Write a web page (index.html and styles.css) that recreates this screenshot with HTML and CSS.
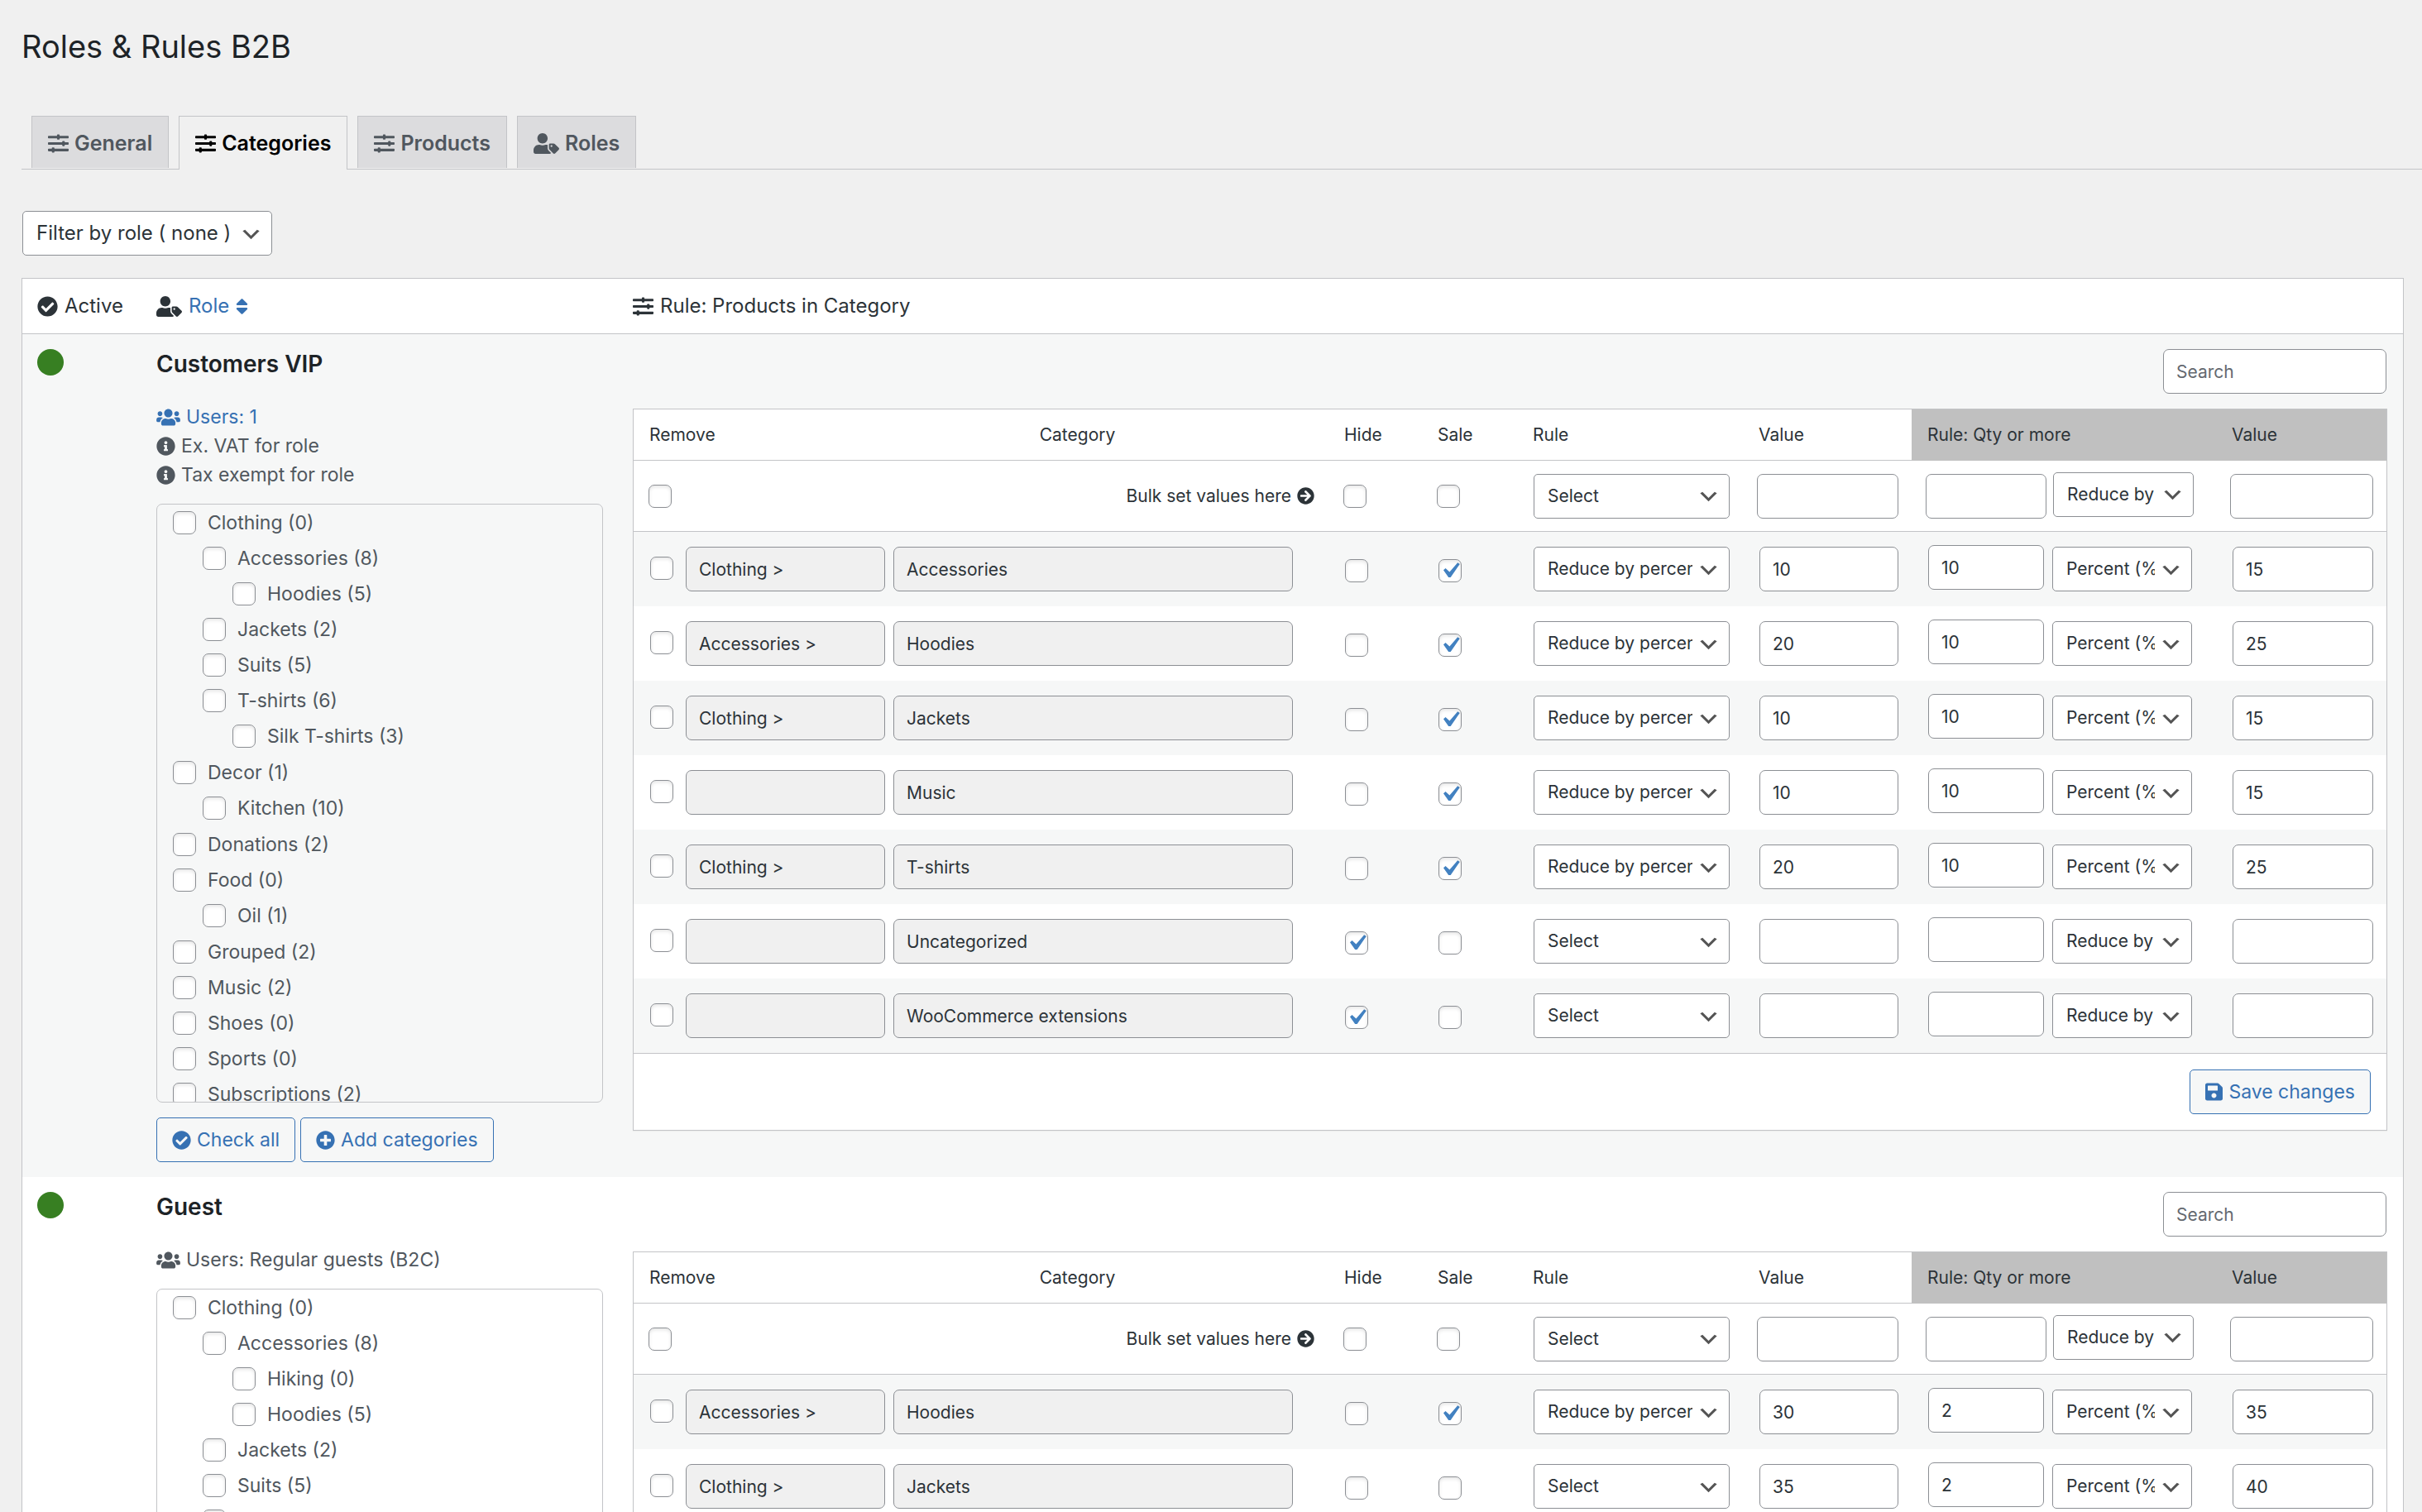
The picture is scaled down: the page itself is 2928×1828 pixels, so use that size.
FILE: index.html
```html
<!DOCTYPE html>
<html lang="en">
<head>
<meta charset="utf-8">
<meta name="viewport" content="width=device-width, initial-scale=1">
<title>Roles &amp; Rules B2B</title>
<link rel="stylesheet" href="styles.css">
</head>
<body>
<svg class="sprite" aria-hidden="true">
  <symbol id="i-sliders" viewBox="0 0 512 512"><path d="M496 384H160v-16c0-8.800-7.200-16-16-16h-32c-8.800 0-16 7.200-16 16v16H16c-8.800 0-16 7.200-16 16v32c0 8.800 7.200 16 16 16h80v16c0 8.800 7.200 16 16 16h32c8.800 0 16-7.200 16-16v-16h336c8.800 0 16-7.200 16-16v-32c0-8.800-7.200-16-16-16zm0-160h-80v-16c0-8.800-7.200-16-16-16h-32c-8.800 0-16 7.200-16 16v16H16c-8.800 0-16 7.200-16 16v32c0 8.800 7.200 16 16 16h336v16c0 8.800 7.200 16 16 16h32c8.800 0 16-7.200 16-16v-16h80c8.800 0 16-7.200 16-16v-32c0-8.800-7.200-16-16-16zm0-160H288V48c0-8.800-7.200-16-16-16h-32c-8.800 0-16 7.200-16 16v16H16C7.200 64 0 71.200 0 80v32c0 8.800 7.200 16 16 16h208v16c0 8.800 7.200 16 16 16h32c8.800 0 16-7.200 16-16v-16h208c8.800 0 16-7.200 16-16V80c0-8.800-7.200-16-16-16z"/></symbol>
  <symbol id="i-user-tag" viewBox="0 0 640 512"><path d="M630.6 364.9l-90.3-90.2c-12-12-28.3-18.7-45.3-18.7h-79.300c-17.700 0-32 14.300-32 32v79.200c0 17 6.700 33.200 18.700 45.200l90.300 90.200c12.500 12.500 32.800 12.500 45.300 0l92.500-92.500c12.600-12.500 12.600-32.700.1-45.200zm-182.800-21c-13.300 0-24-10.700-24-24s10.700-24 24-24 24 10.700 24 24c0 13.200-10.700 24-24 24zm-223.800-88c70.700 0 128-57.300 128-128C352 57.300 294.700 0 224 0S96 57.300 96 128c0 70.600 57.300 127.900 128 127.900zm127.800 111.200V294c-12.200-3.600-24.900-6.200-38.200-6.200h-16.700c-22.200 10.200-46.900 16-72.900 16s-50.600-5.800-72.900-16h-16.700C60.200 287.900 0 348.100 0 422.300v41.600c0 26.500 21.500 48 48 48h352c15.500 0 29.100-7.500 37.900-18.900l-58-58c-18.100-18.100-28.100-42.200-28.100-67.900z"/></symbol>
  <symbol id="i-users" viewBox="0 0 640 512"><path d="M96 224c35.300 0 64-28.700 64-64s-28.700-64-64-64-64 28.700-64 64 28.700 64 64 64zm448 0c35.300 0 64-28.700 64-64s-28.700-64-64-64-64 28.700-64 64 28.700 64 64 64zm32 32h-64c-17.600 0-33.500 7.100-45.100 18.600 40.300 22.100 68.900 62 75.100 109.400h66c17.700 0 32-14.300 32-32v-32c0-35.300-28.700-64-64-64zm-256 0c61.900 0 112-50.100 112-112S381.900 32 320 32 208 82.100 208 144s50.100 112 112 112zm76.800 32h-8.300c-20.800 10-43.900 16-68.500 16s-47.600-6-68.500-16h-8.300C179.600 288 128 339.600 128 403.200V432c0 26.500 21.500 48 48 48h288c26.500 0 48-21.500 48-48v-28.800c0-63.600-51.600-115.200-115.200-115.200zm-223.700-13.400C161.500 263.100 145.600 256 128 256H64c-35.300 0-64 28.700-64 64v32c0 17.700 14.300 32 32 32h65.900c6.300-47.400 34.900-87.300 75.200-109.400z"/></symbol>
  <symbol id="i-check" viewBox="0 0 512 512"><path d="M504 256c0 136.967-111.033 248-248 248S8 392.967 8 256 119.033 8 256 8s248 111.033 248 248zM227.314 387.314l184-184c6.248-6.248 6.248-16.379 0-22.627l-22.627-22.627c-6.248-6.249-16.379-6.249-22.628 0L216 308.118l-70.059-70.059c-6.248-6.248-16.379-6.248-22.628 0l-22.627 22.627c-6.248 6.248-6.248 16.379 0 22.627l104 104c6.249 6.249 16.379 6.249 22.628.001z"/></symbol>
  <symbol id="i-info" viewBox="0 0 512 512"><path d="M256 8C119.043 8 8 119.083 8 256c0 136.997 111.043 248 248 248s248-111.003 248-248C504 119.083 392.957 8 256 8zm0 110c23.196 0 42 18.804 42 42s-18.804 42-42 42-42-18.804-42-42 18.804-42 42-42zm56 254c0 6.627-5.373 12-12 12h-88c-6.627 0-12-5.373-12-12v-24c0-6.627 5.373-12 12-12h12v-64h-12c-6.627 0-12-5.373-12-12v-24c0-6.627 5.373-12 12-12h64c6.627 0 12 5.373 12 12v100h12c6.627 0 12 5.373 12 12v24z"/></symbol>
  <symbol id="i-plus" viewBox="0 0 512 512"><path d="M256 8C119 8 8 119 8 256s111 248 248 248 248-111 248-248S393 8 256 8zm144 276c0 6.600-5.400 12-12 12h-92v92c0 6.600-5.400 12-12 12h-56c-6.600 0-12-5.400-12-12v-92h-92c-6.600 0-12-5.400-12-12v-56c0-6.600 5.400-12 12-12h92v-92c0-6.600 5.400-12 12-12h56c6.600 0 12 5.400 12 12v92h92c6.600 0 12 5.400 12 12v56z"/></symbol>
  <symbol id="i-arrow" viewBox="0 0 512 512"><path d="M256 8c137 0 248 111 248 248S393 504 256 504 8 393 8 256 119 8 256 8zm-28.900 143.600l75.500 72.400H120c-13.300 0-24 10.700-24 24v16c0 13.300 10.700 24 24 24h182.600l-75.500 72.400c-9.700 9.300-9.900 24.800-.4 34.300l11 10.900c9.400 9.400 24.600 9.400 33.900 0L404.300 273c9.400-9.400 9.400-24.600 0-33.900L271.600 106.300c-9.400-9.400-24.600-9.400-33.900 0l-11 10.900c-9.500 9.600-9.300 25.100.4 34.400z"/></symbol>
  <symbol id="i-save" viewBox="0 0 448 512"><path d="M433.941 129.941l-83.882-83.882A48 48 0 0 0 316.118 32H48C21.490 32 0 53.490 0 80v352c0 26.510 21.490 48 48 48h352c26.510 0 48-21.490 48-48V163.882a48 48 0 0 0-14.059-33.941zM224 416c-35.346 0-64-28.654-64-64 0-35.346 28.654-64 64-64s64 28.654 64 64c0 35.346-28.654 64-64 64zm96-304.520V212c0 6.627-5.373 12-12 12H76c-6.627 0-12-5.373-12-12V108c0-6.627 5.373-12 12-12h228.520c3.183 0 6.235 1.264 8.485 3.515l3.480 3.480A11.996 11.996 0 0 1 320 111.480z"/></symbol>
  <symbol id="i-sort" viewBox="0 0 320 512"><path d="M41 288h238c21.400 0 32.100 25.900 17 41L177 448c-9.400 9.400-24.600 9.400-33.900 0L24 329c-15.100-15.100-4.400-41 17-41zm255-105L177 64c-9.400-9.400-24.600-9.400-33.900 0L24 183c-15.100 15.100-4.400 41 17 41h238c21.400 0 32.100-25.900 17-41z"/></symbol>
</svg>

<main class="page">
  <h1 class="title">Roles &amp; Rules B2B</h1>

  <nav class="tabs">
    <a class="tab" href="#general"><svg class="icon"><use href="#i-sliders"/></svg>General</a>
    <a class="tab tab-active" href="#categories" aria-current="page"><svg class="icon"><use href="#i-sliders"/></svg>Categories</a>
    <a class="tab" href="#products"><svg class="icon"><use href="#i-sliders"/></svg>Products</a>
    <a class="tab" href="#roles"><svg class="icon icon-wide"><use href="#i-user-tag"/></svg>Roles</a>
  </nav>

  <select class="field select filter" aria-label="Filter by role"><option>Filter by role ( none )</option></select>

  <table class="roles">
    <colgroup><col class="w-active"><col class="w-role"><col></colgroup>
    <thead>
      <tr>
        <th class="c-active" scope="col"><span class="head"><svg class="icon"><use href="#i-check"/></svg>Active</span></th>
        <th scope="col"><span class="head"><svg class="icon icon-wide"><use href="#i-user-tag"/></svg><a class="head link" href="#sort">Role<svg class="icon icon-sort"><use href="#i-sort"/></svg></a></span></th>
        <th scope="col"><span class="head"><svg class="icon"><use href="#i-sliders"/></svg>Rule: Products in Category</span></th>
      </tr>
    </thead>
    <tbody>
      <tr class="role">
        <td class="c-active"><span class="dot" role="img" aria-label="Active"></span></td>
        <td>
          <h2 class="role-name">Customers VIP</h2>
          <ul class="facts">
            <li><a class="fact link" href="#users"><svg class="icon icon-users"><use href="#i-users"/></svg>Users: 1</a></li>
            <li class="fact"><svg class="icon icon-text"><use href="#i-info"/></svg>Ex. VAT for role</li>
            <li class="fact"><svg class="icon icon-text"><use href="#i-info"/></svg>Tax exempt for role</li>
          </ul>
          <ul class="tree">
            <li><label><input type="checkbox">Clothing (0)</label>
              <ul>
                <li><label><input type="checkbox">Accessories (8)</label>
                  <ul>
                    <li><label><input type="checkbox">Hoodies (5)</label></li>
                  </ul>
                </li>
                <li><label><input type="checkbox">Jackets (2)</label></li>
                <li><label><input type="checkbox">Suits (5)</label></li>
                <li><label><input type="checkbox">T-shirts (6)</label>
                  <ul>
                    <li><label><input type="checkbox">Silk T-shirts (3)</label></li>
                  </ul>
                </li>
              </ul>
            </li>
            <li><label><input type="checkbox">Decor (1)</label>
              <ul>
                <li><label><input type="checkbox">Kitchen (10)</label></li>
              </ul>
            </li>
            <li><label><input type="checkbox">Donations (2)</label></li>
            <li><label><input type="checkbox">Food (0)</label>
              <ul>
                <li><label><input type="checkbox">Oil (1)</label></li>
              </ul>
            </li>
            <li><label><input type="checkbox">Grouped (2)</label></li>
            <li><label><input type="checkbox">Music (2)</label></li>
            <li><label><input type="checkbox">Shoes (0)</label></li>
            <li><label><input type="checkbox">Sports (0)</label></li>
            <li><label><input type="checkbox">Subscriptions (2)</label></li>
          </ul>
          <div class="actions">
            <button class="button" type="button"><svg class="icon icon-text"><use href="#i-check"/></svg>Check all</button>
            <button class="button" type="button"><svg class="icon icon-text"><use href="#i-plus"/></svg>Add categories</button>
          </div>
        </td>
        <td class="c-rules">
          <div class="search"><input class="field" type="search" placeholder="Search" aria-label="Search categories for Customers VIP"></div>
          <table class="rules">
            <colgroup><col class="w-remove"><col class="w-parent"><col><col class="w-hide"><col class="w-sale"><col class="w-rule"><col class="w-value"><col class="w-qty"><col class="w-qvalue"></colgroup>
            <thead>
              <tr>
                <th scope="col" colspan="2">Remove</th><th class="h-category" scope="col">Category</th><th scope="col">Hide</th><th scope="col">Sale</th><th scope="col">Rule</th><th scope="col">Value</th><th class="h-qty" scope="col">Rule: Qty or more</th><th class="h-qty" scope="col">Value</th>
              </tr>
              <tr class="bulk">
                <td><input type="checkbox" aria-label="Remove all"></td>
                <td class="bulk-text" colspan="2"><span class="bulk-label">Bulk set values here<svg class="icon icon-small"><use href="#i-arrow"/></svg></span></td>
                <td><input type="checkbox" aria-label="Hide all"></td>
                <td><input type="checkbox" aria-label="Sale all"></td>
                <td class="c-rule"><select class="field select" aria-label="Rule for all"><option>Select</option></select></td>
                <td class="c-value"><input class="field" type="text" aria-label="Value for all"></td>
                <td class="c-qty"><div class="qty"><input class="field" type="text" aria-label="Quantity for all"><select class="field select" aria-label="Quantity rule for all"><option>Reduce by</option></select></div></td>
                <td class="c-value"><input class="field" type="text" aria-label="Quantity value for all"></td>
              </tr>
            </thead>
            <tbody>
              <tr>
                <td class="c-remove"><input type="checkbox" aria-label="Remove"></td>
                <td class="c-parent"><input class="field" type="text" value="Clothing &gt;" readonly aria-label="Parent category"></td>
                <td class="c-category"><input class="field" type="text" value="Accessories" readonly aria-label="Category"></td>
                <td class="c-check"><input type="checkbox" aria-label="Hide"></td>
                <td class="c-check"><input type="checkbox" checked aria-label="Sale"></td>
                <td class="c-rule"><select class="field select" aria-label="Rule"><option>Reduce by percent (%)</option></select></td>
                <td class="c-value"><input class="field" type="text" value="10" aria-label="Value"></td>
                <td class="c-qty"><div class="qty"><input class="field" type="text" value="10" aria-label="Quantity"><select class="field select" aria-label="Quantity rule"><option>Percent (%)</option></select></div></td>
                <td class="c-value"><input class="field" type="text" value="15" aria-label="Quantity value"></td>
              </tr>
              <tr>
                <td class="c-remove"><input type="checkbox" aria-label="Remove"></td>
                <td class="c-parent"><input class="field" type="text" value="Accessories &gt;" readonly aria-label="Parent category"></td>
                <td class="c-category"><input class="field" type="text" value="Hoodies" readonly aria-label="Category"></td>
                <td class="c-check"><input type="checkbox" aria-label="Hide"></td>
                <td class="c-check"><input type="checkbox" checked aria-label="Sale"></td>
                <td class="c-rule"><select class="field select" aria-label="Rule"><option>Reduce by percent (%)</option></select></td>
                <td class="c-value"><input class="field" type="text" value="20" aria-label="Value"></td>
                <td class="c-qty"><div class="qty"><input class="field" type="text" value="10" aria-label="Quantity"><select class="field select" aria-label="Quantity rule"><option>Percent (%)</option></select></div></td>
                <td class="c-value"><input class="field" type="text" value="25" aria-label="Quantity value"></td>
              </tr>
              <tr>
                <td class="c-remove"><input type="checkbox" aria-label="Remove"></td>
                <td class="c-parent"><input class="field" type="text" value="Clothing &gt;" readonly aria-label="Parent category"></td>
                <td class="c-category"><input class="field" type="text" value="Jackets" readonly aria-label="Category"></td>
                <td class="c-check"><input type="checkbox" aria-label="Hide"></td>
                <td class="c-check"><input type="checkbox" checked aria-label="Sale"></td>
                <td class="c-rule"><select class="field select" aria-label="Rule"><option>Reduce by percent (%)</option></select></td>
                <td class="c-value"><input class="field" type="text" value="10" aria-label="Value"></td>
                <td class="c-qty"><div class="qty"><input class="field" type="text" value="10" aria-label="Quantity"><select class="field select" aria-label="Quantity rule"><option>Percent (%)</option></select></div></td>
                <td class="c-value"><input class="field" type="text" value="15" aria-label="Quantity value"></td>
              </tr>
              <tr>
                <td class="c-remove"><input type="checkbox" aria-label="Remove"></td>
                <td class="c-parent"><input class="field" type="text" value="" readonly aria-label="Parent category"></td>
                <td class="c-category"><input class="field" type="text" value="Music" readonly aria-label="Category"></td>
                <td class="c-check"><input type="checkbox" aria-label="Hide"></td>
                <td class="c-check"><input type="checkbox" checked aria-label="Sale"></td>
                <td class="c-rule"><select class="field select" aria-label="Rule"><option>Reduce by percent (%)</option></select></td>
                <td class="c-value"><input class="field" type="text" value="10" aria-label="Value"></td>
                <td class="c-qty"><div class="qty"><input class="field" type="text" value="10" aria-label="Quantity"><select class="field select" aria-label="Quantity rule"><option>Percent (%)</option></select></div></td>
                <td class="c-value"><input class="field" type="text" value="15" aria-label="Quantity value"></td>
              </tr>
              <tr>
                <td class="c-remove"><input type="checkbox" aria-label="Remove"></td>
                <td class="c-parent"><input class="field" type="text" value="Clothing &gt;" readonly aria-label="Parent category"></td>
                <td class="c-category"><input class="field" type="text" value="T-shirts" readonly aria-label="Category"></td>
                <td class="c-check"><input type="checkbox" aria-label="Hide"></td>
                <td class="c-check"><input type="checkbox" checked aria-label="Sale"></td>
                <td class="c-rule"><select class="field select" aria-label="Rule"><option>Reduce by percent (%)</option></select></td>
                <td class="c-value"><input class="field" type="text" value="20" aria-label="Value"></td>
                <td class="c-qty"><div class="qty"><input class="field" type="text" value="10" aria-label="Quantity"><select class="field select" aria-label="Quantity rule"><option>Percent (%)</option></select></div></td>
                <td class="c-value"><input class="field" type="text" value="25" aria-label="Quantity value"></td>
              </tr>
              <tr>
                <td class="c-remove"><input type="checkbox" aria-label="Remove"></td>
                <td class="c-parent"><input class="field" type="text" value="" readonly aria-label="Parent category"></td>
                <td class="c-category"><input class="field" type="text" value="Uncategorized" readonly aria-label="Category"></td>
                <td class="c-check"><input type="checkbox" checked aria-label="Hide"></td>
                <td class="c-check"><input type="checkbox" aria-label="Sale"></td>
                <td class="c-rule"><select class="field select" aria-label="Rule"><option>Select</option></select></td>
                <td class="c-value"><input class="field" type="text" aria-label="Value"></td>
                <td class="c-qty"><div class="qty"><input class="field" type="text" aria-label="Quantity"><select class="field select" aria-label="Quantity rule"><option>Reduce by</option></select></div></td>
                <td class="c-value"><input class="field" type="text" aria-label="Quantity value"></td>
              </tr>
              <tr>
                <td class="c-remove"><input type="checkbox" aria-label="Remove"></td>
                <td class="c-parent"><input class="field" type="text" value="" readonly aria-label="Parent category"></td>
                <td class="c-category"><input class="field" type="text" value="WooCommerce extensions" readonly aria-label="Category"></td>
                <td class="c-check"><input type="checkbox" checked aria-label="Hide"></td>
                <td class="c-check"><input type="checkbox" aria-label="Sale"></td>
                <td class="c-rule"><select class="field select" aria-label="Rule"><option>Select</option></select></td>
                <td class="c-value"><input class="field" type="text" aria-label="Value"></td>
                <td class="c-qty"><div class="qty"><input class="field" type="text" aria-label="Quantity"><select class="field select" aria-label="Quantity rule"><option>Reduce by</option></select></div></td>
                <td class="c-value"><input class="field" type="text" aria-label="Quantity value"></td>
              </tr>
            </tbody>
            <tfoot>
              <tr><td colspan="9"><div class="save"><button class="button" type="submit"><svg class="icon icon-save"><use href="#i-save"/></svg>Save changes</button></div></td></tr>
            </tfoot>
          </table>
        </td>
      </tr>

      <tr class="role">
        <td class="c-active"><span class="dot" role="img" aria-label="Active"></span></td>
        <td>
          <h2 class="role-name">Guest</h2>
          <ul class="facts">
            <li class="fact"><svg class="icon icon-users"><use href="#i-users"/></svg>Users: Regular guests (B2C)</li>
          </ul>
          <ul class="tree">
            <li><label><input type="checkbox">Clothing (0)</label>
              <ul>
                <li><label><input type="checkbox">Accessories (8)</label>
                  <ul>
                    <li><label><input type="checkbox">Hiking (0)</label></li>
                    <li><label><input type="checkbox">Hoodies (5)</label></li>
                  </ul>
                </li>
                <li><label><input type="checkbox">Jackets (2)</label></li>
                <li><label><input type="checkbox">Suits (5)</label></li>
                <li><label><input type="checkbox">T-shirts (6)</label></li>
              </ul>
            </li>
          </ul>
        </td>
        <td class="c-rules">
          <div class="search"><input class="field" type="search" placeholder="Search" aria-label="Search categories for Guest"></div>
          <table class="rules">
            <colgroup><col class="w-remove"><col class="w-parent"><col><col class="w-hide"><col class="w-sale"><col class="w-rule"><col class="w-value"><col class="w-qty"><col class="w-qvalue"></colgroup>
            <thead>
              <tr>
                <th scope="col" colspan="2">Remove</th><th class="h-category" scope="col">Category</th><th scope="col">Hide</th><th scope="col">Sale</th><th scope="col">Rule</th><th scope="col">Value</th><th class="h-qty" scope="col">Rule: Qty or more</th><th class="h-qty" scope="col">Value</th>
              </tr>
              <tr class="bulk">
                <td><input type="checkbox" aria-label="Remove all"></td>
                <td class="bulk-text" colspan="2"><span class="bulk-label">Bulk set values here<svg class="icon icon-small"><use href="#i-arrow"/></svg></span></td>
                <td><input type="checkbox" aria-label="Hide all"></td>
                <td><input type="checkbox" aria-label="Sale all"></td>
                <td class="c-rule"><select class="field select" aria-label="Rule for all"><option>Select</option></select></td>
                <td class="c-value"><input class="field" type="text" aria-label="Value for all"></td>
                <td class="c-qty"><div class="qty"><input class="field" type="text" aria-label="Quantity for all"><select class="field select" aria-label="Quantity rule for all"><option>Reduce by</option></select></div></td>
                <td class="c-value"><input class="field" type="text" aria-label="Quantity value for all"></td>
              </tr>
            </thead>
            <tbody>
              <tr>
                <td class="c-remove"><input type="checkbox" aria-label="Remove"></td>
                <td class="c-parent"><input class="field" type="text" value="Accessories &gt;" readonly aria-label="Parent category"></td>
                <td class="c-category"><input class="field" type="text" value="Hoodies" readonly aria-label="Category"></td>
                <td class="c-check"><input type="checkbox" aria-label="Hide"></td>
                <td class="c-check"><input type="checkbox" checked aria-label="Sale"></td>
                <td class="c-rule"><select class="field select" aria-label="Rule"><option>Reduce by percent (%)</option></select></td>
                <td class="c-value"><input class="field" type="text" value="30" aria-label="Value"></td>
                <td class="c-qty"><div class="qty"><input class="field" type="text" value="2" aria-label="Quantity"><select class="field select" aria-label="Quantity rule"><option>Percent (%)</option></select></div></td>
                <td class="c-value"><input class="field" type="text" value="35" aria-label="Quantity value"></td>
              </tr>
              <tr>
                <td class="c-remove"><input type="checkbox" aria-label="Remove"></td>
                <td class="c-parent"><input class="field" type="text" value="Clothing &gt;" readonly aria-label="Parent category"></td>
                <td class="c-category"><input class="field" type="text" value="Jackets" readonly aria-label="Category"></td>
                <td class="c-check"><input type="checkbox" aria-label="Hide"></td>
                <td class="c-check"><input type="checkbox" aria-label="Sale"></td>
                <td class="c-rule"><select class="field select" aria-label="Rule"><option>Select</option></select></td>
                <td class="c-value"><input class="field" type="text" value="35" aria-label="Value"></td>
                <td class="c-qty"><div class="qty"><input class="field" type="text" value="2" aria-label="Quantity"><select class="field select" aria-label="Quantity rule"><option>Percent (%)</option></select></div></td>
                <td class="c-value"><input class="field" type="text" value="40" aria-label="Quantity value"></td>
              </tr>
            </tbody>
          </table>
        </td>
      </tr>
    </tbody>
  </table>
</main>
</body>
</html>
```
FILE: styles.css
```css
:root {
  --line: #c3c4c7;
  --edge: #8c8f94;
  --ink: #2c3338;
  --muted: #50575e;
  --blue: #3671b3;
  --tint: #f6f7f7;
}

* { box-sizing: border-box; }

html { scrollbar-width: none; }

body {
  margin: 0;
  background: #f0f0f0;
  color: var(--ink);
  font: 24px/36px Inter, "Liberation Sans", sans-serif;
}

.sprite { display: none; }

.page { padding: 31px 0 18px 26px; }

ul { list-style: none; margin: 0; padding: 0; }

.link { color: var(--blue); text-decoration: none; }

/* Icons */
.icon { flex: none; width: 25px; height: 25px; fill: currentColor; }
.icon-wide { width: 31px; }
.icon-sort { width: 15px; }
.icon-users { width: 29px; height: 23px; }
.icon-text { width: 23px; height: 23px; }
.icon-save { width: 21px; height: 24px; }
.icon-small { width: 21px; height: 21px; }

/* Heading and tabs */
.title {
  margin: 0 0 59px;
  color: #1d2327;
  font-size: 38px;
  font-weight: 400;
  line-height: 50px;
}

.tabs {
  display: flex;
  align-items: flex-start;
  gap: 12px;
  height: 65px;
  margin-bottom: 50px;
  padding-left: 12px;
  border-bottom: 1px solid var(--line);
}

.tab {
  display: flex;
  align-items: center;
  gap: 7px;
  height: 63px;
  padding: 2px 19px 0;
  border: 1px solid var(--line);
  border-bottom: 0;
  background: #dcdcde;
  color: var(--muted);
  font-size: 25px;
  font-weight: 600;
  text-decoration: none;
}

.tab-active {
  height: 65px;
  padding-bottom: 2px;
  background: #f0f0f0;
  color: #000;
}

/* Form controls */
.field {
  display: block;
  width: 100%;
  height: 54px;
  margin: 0;
  padding: 0 15px;
  border: 1px solid var(--edge);
  border-radius: 7px;
  background-color: #fff;
  color: var(--ink);
  font: 21px/36px Inter, "Liberation Sans", sans-serif;
  appearance: none;
}

.field[readonly] { background-color: #f0f0f0; }
.field::placeholder { color: #646970; opacity: 1; }

.select {
  padding: 0 44px 0 16px;
  border-radius: 5px;
  background-image: url("data:image/svg+xml,%3Csvg xmlns='http://www.w3.org/2000/svg' viewBox='0 0 20 20'%3E%3Cpath d='M5 6l5 5 5-5 2 1-7 7-7-7 2-1z' fill='%23555'/%3E%3C/svg%3E");
  background-repeat: no-repeat;
  background-position: right 10px top 55%;
  background-size: 29px 29px;
}

.filter {
  width: auto;
  margin: 0 0 27px 1px;
  padding-right: 48px;
  font-size: 24px;
}

input[type="checkbox"] {
  display: block;
  flex: none;
  width: 28px;
  height: 28px;
  margin: 0;
  border: 1px solid var(--edge);
  border-radius: 7px;
  background: #fff center / 38px 38px no-repeat;
  box-shadow: inset 0 2px 4px rgba(0, 0, 0, 0.1);
  appearance: none;
}

input[type="checkbox"]:checked {
  background-image: url("data:image/svg+xml,%3Csvg xmlns='http://www.w3.org/2000/svg' viewBox='0 0 20 20'%3E%3Cpath d='M14.83 4.89l1.34.94-5.81 8.38H9.02L5.78 9.67l1.34-1.25 2.57 2.4z' fill='%234281c1'/%3E%3C/svg%3E");
}

.button {
  display: inline-flex;
  align-items: center;
  gap: 7px;
  height: 54px;
  padding: 0 18px;
  border: 1px solid var(--blue);
  border-radius: 5px;
  background: var(--tint);
  color: var(--blue);
  font: 23px/36px Inter, "Liberation Sans", sans-serif;
  white-space: nowrap;
}

/* Outer table of roles */
table { width: 100%; border-collapse: separate; border-spacing: 0; table-layout: fixed; }
th, td { padding: 0; font-weight: 400; text-align: left; }

.roles {
  width: calc(100% - 22px);
  border: 1px solid var(--line);
  background: #fff;
}

.w-active { width: 162px; }
.w-role { width: 576px; }

.roles > thead th {
  padding: 15px 0;
  border-bottom: 1px solid var(--line);
}

.head { display: flex; align-items: center; gap: 8px; }

.role > td { padding: 18px 0; vertical-align: top; }
.role:nth-child(odd) > td { background: var(--tint); }
.roles > thead .c-active, .role > .c-active { padding-left: 18px; }
.role > .c-rules { padding-right: 19px; }

.dot {
  display: block;
  width: 32px;
  height: 32px;
  border-radius: 50%;
  background: #377f22;
}

.role-name {
  margin: 0 0 29px;
  color: #1d2327;
  font-size: 28px;
  font-weight: 600;
  line-height: 36px;
}

.fact {
  display: flex;
  align-items: center;
  gap: 7px;
  font-size: 23px;
  line-height: 35px;
}

.facts, .tree { color: var(--muted); }
.facts .link { color: var(--blue); }

/* Scrolling category tree */
.tree {
  width: 540px;
  height: 724px;
  margin: 17px 0 18px;
  padding: 0 19px;
  overflow: auto;
  scrollbar-width: none;
  border: 1px solid var(--line);
  border-radius: 7px;
  font-size: 23px;
}

.tree ul { padding-left: 36px; }
.tree > li > ul { padding-bottom: 1px; }

.tree label {
  display: flex;
  align-items: center;
  gap: 14px;
  height: 43px;
}

.actions { display: flex; gap: 6px; }

/* Rules of one role */
.search {
  display: flex;
  justify-content: flex-end;
  margin-bottom: 18px;
  padding-right: 1px;
}

.search .field { width: 270px; }

.rules {
  border: 1px solid var(--line);
  background: #fff;
  box-shadow: 0 1px 1px rgba(0, 0, 0, 0.04);
  font-size: 21px;
}

.w-remove { width: 63px; }
.w-parent { width: 251px; }
.w-hide { width: 113px; }
.w-sale { width: 115px; }
.w-rule { width: 273px; }
.w-value { width: 204px; }
.w-qty { width: 368px; }
.w-qvalue { width: 206px; }

.rules > thead th {
  height: 62px;
  padding-left: 19px;
  border-bottom: 1px solid var(--line);
}

.rules > thead .h-category { padding: 0 81px 0 0; text-align: center; }
.rules > thead .h-qty { border-color: #c0c0c0; background: #c0c0c0; }

.bulk > td {
  height: 86px;
  padding-left: 18px;
  border-bottom: 1px solid var(--line);
}

.bulk > .bulk-text { padding-right: 17px; }
.bulk > .c-value, .bulk > .c-qty { padding-left: 17px; }

.bulk-label {
  display: flex;
  align-items: center;
  justify-content: flex-end;
  gap: 7px;
}

.rules > tbody td { height: 90px; padding-left: 20px; }
.rules > tbody > tr:nth-child(odd) > td { background: var(--tint); }
.rules > tbody .c-remove { padding-bottom: 3px; }
.rules > tbody .c-check { padding-top: 4px; }
.rules > tbody .c-parent { padding: 0 10px 0 0; }
.rules > tbody .c-category { padding: 0 43px 0 0; }
.rules .c-value { padding-right: 16px; }
.rules .c-rule { padding: 0 16px 0 20px; }
.rules .c-rule .field { width: 237px; }

.qty { display: flex; align-items: center; gap: 10px; }
.qty input { width: 140px; margin-bottom: 4px; }
.qty select { width: 169px; }
.bulk .qty { gap: 8px; }
.bulk .qty input { width: 146px; margin-bottom: 0; }
.bulk .qty select { width: 170px; margin-bottom: 4px; }

.rules > tfoot td { border-top: 1px solid var(--line); }

.save {
  display: flex;
  justify-content: flex-end;
  padding: 19px;
}
```
